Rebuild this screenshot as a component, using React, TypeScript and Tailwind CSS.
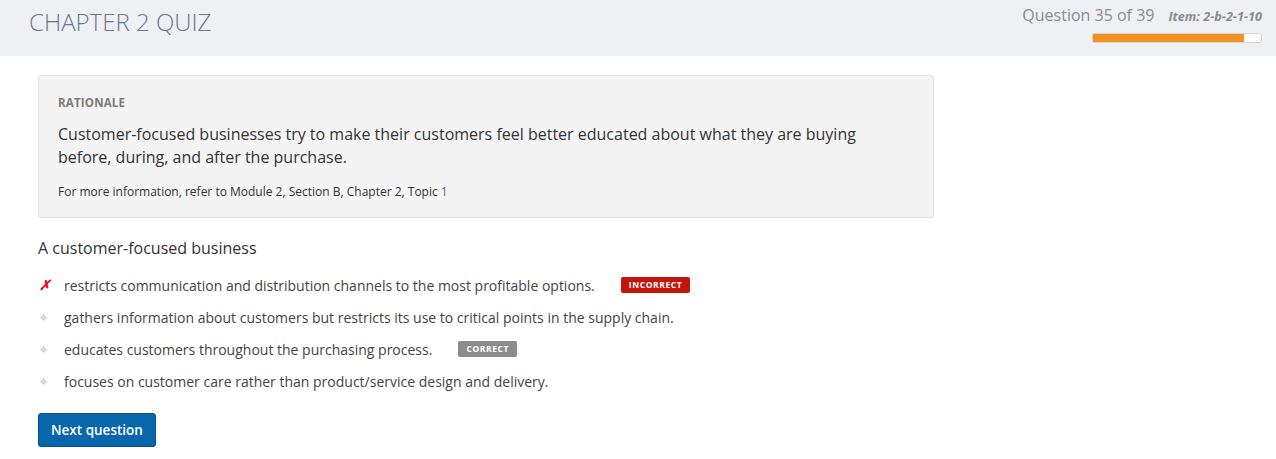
import React from 'react';

const options = [
  { text: 'restricts communication and distribution channels to the most profitable options.', mark: 'wrong', badge: 'INCORRECT' },
  { text: 'gathers information about customers but restricts its use to critical points in the supply chain.' },
  { text: 'educates customers throughout the purchasing process.', badge: 'CORRECT' },
  { text: 'focuses on customer care rather than product/service design and delivery.' },
];

// little four-point bullet
function Diamond() {
  return (
    <svg width="7" height="7" viewBox="0 0 7 7" className="block">
      <path d="M3.5 0.5 L4.4 2.6 L6.5 3.5 L4.4 4.4 L3.5 6.5 L2.6 4.4 L0.5 3.5 L2.6 2.6 Z" fill="#e2e2e2" stroke="#bbbbbb" strokeWidth="0.8" />
    </svg>
  );
}

export default function App() {
  const total = 39;
  const current = 35;
  return (
    <div className="min-h-[459px] bg-white text-[#333]" style={{ fontFamily: '"Open Sans", "Liberation Sans", sans-serif' }}>
      {/* Header */}
      <div className="h-14 bg-[#eff0f4] flex justify-between pl-[29px] pr-[14px]">
        <div className="pt-[4px] text-[24px] font-light text-[#6b7887]">CHAPTER 2 QUIZ</div>
        <div className="flex flex-col items-end pt-[3px]">
          <div className="flex items-baseline gap-[14px]">
            <span className="text-[16px] text-[#8c8c8c]">Question {current} of {total}</span>
            <span className="text-[12.7px] font-bold italic text-[#8c8c8c]">Item: 2-b-2-1-10</span>
          </div>
          <div className="mt-[6px] w-[170px] h-[10px] bg-white border border-[#d5d5d5] rounded-[2px] overflow-hidden">
            <div className="h-full bg-[#f39020]" style={{ width: `${(current / total) * 100}%` }} />
          </div>
        </div>
      </div>

      <div className="pl-[38px] pt-[19px]">
        {/* Rationale */}
        <div className="w-[896px] bg-[#f4f4f4] border border-[#e2e2e2] rounded-[3px] pl-[19px] pr-[45px] pt-[18px] pb-[16px]">
          <div className="text-[11.5px] font-bold text-[#7a7a7a] tracking-[0.2px]">RATIONALE</div>
          <p className="mt-[12px] text-[16px] leading-[23px] text-[#333]">
            Customer-focused businesses try to make their customers feel better educated about what they are buying before, during, and after the purchase.
          </p>
          <p className="mt-[14px] text-[12px] text-[#333]">
            For more information, refer to Module 2, Section B, Chapter 2, Topic <span className="text-[#2a6ebb]">1</span>
          </p>
        </div>

        {/* Question */}
        <div className="mt-[18px] text-[16px] text-[#333]">A customer-focused business</div>

        <ul className="mt-[14px] flex flex-col gap-[10px]">
          {options.map((o, i) => (
            <li key={i} className="flex items-center h-[22px]">
              <span className="w-[26px] flex items-center pl-[1px]">
                {o.mark === 'wrong' ? (
                  <span className="text-[14px] font-bold italic text-[#e8101a] leading-none">✗</span>
                ) : (
                  <span className="pl-[1px]"><Diamond /></span>
                )}
              </span>
              <span className="text-[14px] text-[#444]">{o.text}</span>
              {o.badge && (
                <span
                  className={`ml-[26px] h-[16px] px-[8px] rounded-[2px] text-[8.5px] font-bold tracking-[0.6px] text-white flex items-center ${
                    o.badge === 'INCORRECT' ? 'bg-[#c4150c]' : 'bg-[#8c8c8c]'
                  }`}
                >
                  {o.badge}
                </span>
              )}
            </li>
          ))}
        </ul>

        <button className="mt-[21px] h-[34px] px-[12px] bg-[#0866ac] border border-[#05508a] rounded-[3px] text-white text-[13.5px] font-semibold">
          Next question
        </button>
      </div>
    </div>
  );
}
